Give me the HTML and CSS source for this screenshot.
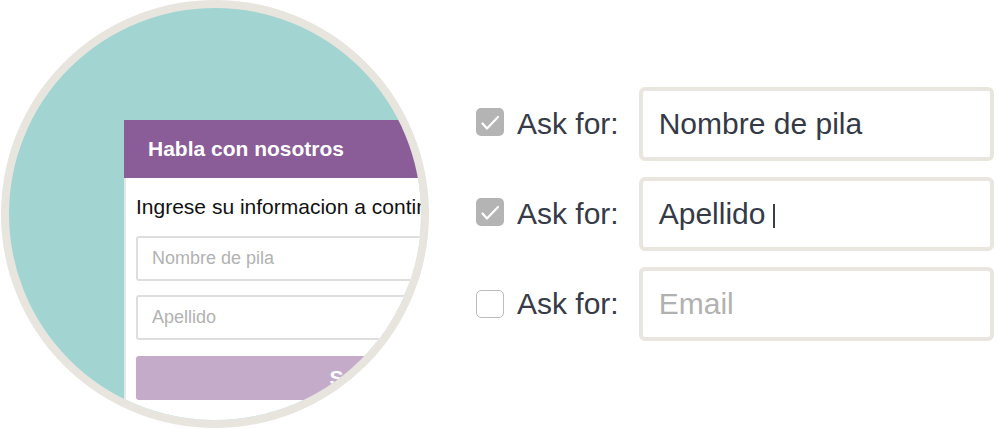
FILE: index.html
```html
<!DOCTYPE html>
<html lang="es">
<head>
  <meta charset="UTF-8">
  <meta name="viewport" content="width=device-width, initial-scale=1.0">
  <title>Ask for fields</title>
  <link rel="stylesheet" href="styles.css">
</head>
<body>

<div class="lens">
  <div class="card">
    <div class="card-header">Habla con nosotros</div>
    <div class="card-body">
      <p class="card-intro">Ingrese su informacion a continuacion</p>
      <input class="card-input" type="text" placeholder="Nombre de pila">
      <input class="card-input" type="text" placeholder="Apellido">
      <button class="card-button">Submit</button>
    </div>
  </div>
</div>

<div class="settings">
  <div class="setting-row">
    <span class="check is-checked">
      <svg viewBox="0 0 28 28" width="28" height="28"><path d="M6.5 15.5 L11 20.5 L22 9" fill="none" stroke="#fff" stroke-width="2.2" stroke-linecap="round" stroke-linejoin="round"/></svg>
    </span>
    <span class="setting-label">Ask for:</span>
    <div class="field">Nombre de pila</div>
  </div>
  <div class="setting-row">
    <span class="check is-checked">
      <svg viewBox="0 0 28 28" width="28" height="28"><path d="M6.5 15.5 L11 20.5 L22 9" fill="none" stroke="#fff" stroke-width="2.2" stroke-linecap="round" stroke-linejoin="round"/></svg>
    </span>
    <span class="setting-label">Ask for:</span>
    <div class="field">Apellido<span class="caret"></span></div>
  </div>
  <div class="setting-row">
    <span class="check"></span>
    <span class="setting-label">Ask for:</span>
    <div class="field is-empty">Email</div>
  </div>
</div>

</body>
</html>
```

FILE: styles.css
```css
body {
  font-family: "Liberation Sans", Arial, sans-serif;
  background: #fff;
  margin: 0;
  padding: 0;
  width: 996px;
  height: 429px;
  display: flex;
  align-items: flex-start;
  overflow: hidden;
}

/* circulo con la vista previa del formulario */
.lens {
  box-sizing: border-box;
  width: 428px;
  height: 428px;
  margin-left: 1px;
  flex-shrink: 0;
  border: 8px solid #e8e5df;
  border-radius: 50%;
  background-color: #a2d5d1;
  overflow: hidden;
  padding: 112px 0 0 115px;
}

.card {
  width: 480px;
  background: #fff;
}

.card-header {
  height: 58px;
  background-color: #8a5c98;
  color: #fff;
  font-weight: bold;
  font-size: 21px;
  padding-left: 24px;
  display: flex;
  align-items: center;
}

.card-body {
  border-left: 2px solid #e3e9e9;
  padding: 17px 10px 20px 10px;
}

.card-intro {
  margin: 0 0 17px 0;
  font-size: 21px;
  color: #111;
  white-space: nowrap;
}

.card-input {
  display: block;
  box-sizing: border-box;
  width: 100%;
  height: 45px;
  margin: 0 0 14px 0;
  padding: 0 14px;
  border: 2px solid #dedede;
  border-radius: 3px;
  font-family: inherit;
  font-size: 18px;
  outline: none;
}

.card-input::placeholder {
  color: #b2b2b2;
}

.card-button {
  display: block;
  width: 100%;
  height: 44px;
  margin-top: 16px;
  border: none;
  border-radius: 3px;
  background-color: #c4abca;
  color: #fff;
  font-family: inherit;
  font-weight: bold;
  font-size: 21px;
}

/* lista de campos a la derecha */
.settings {
  width: 518px;
  margin-left: 47px;
  padding-top: 87px;
  display: flex;
  flex-direction: column;
  gap: 16px;
}

.setting-row {
  display: flex;
  align-items: center;
  height: 74px;
}

.check {
  box-sizing: border-box;
  width: 28px;
  height: 28px;
  border: 1.5px solid #bcbcbc;
  border-radius: 5px;
  background: #fff;
  flex-shrink: 0;
}

.check.is-checked {
  border: none;
  background-color: #b4b4b4;
  margin-bottom: 4px;
}

.check svg {
  display: block;
}

.setting-label {
  margin-left: 13px;
  margin-right: 20px;
  font-size: 30px;
  color: #363b47;
  white-space: nowrap;
}

.field {
  flex: 1;
  box-sizing: border-box;
  height: 74px;
  border: 4px solid #e9e6df;
  border-radius: 6px;
  padding: 0 16px;
  display: flex;
  align-items: center;
  font-size: 30px;
  color: #343a46;
}

.field.is-empty {
  color: #b1b1b1;
}

.caret {
  display: inline-block;
  width: 2px;
  height: 24px;
  margin-left: 8px;
  margin-top: 4px;
  background-color: #3a3f4b;
}
```
